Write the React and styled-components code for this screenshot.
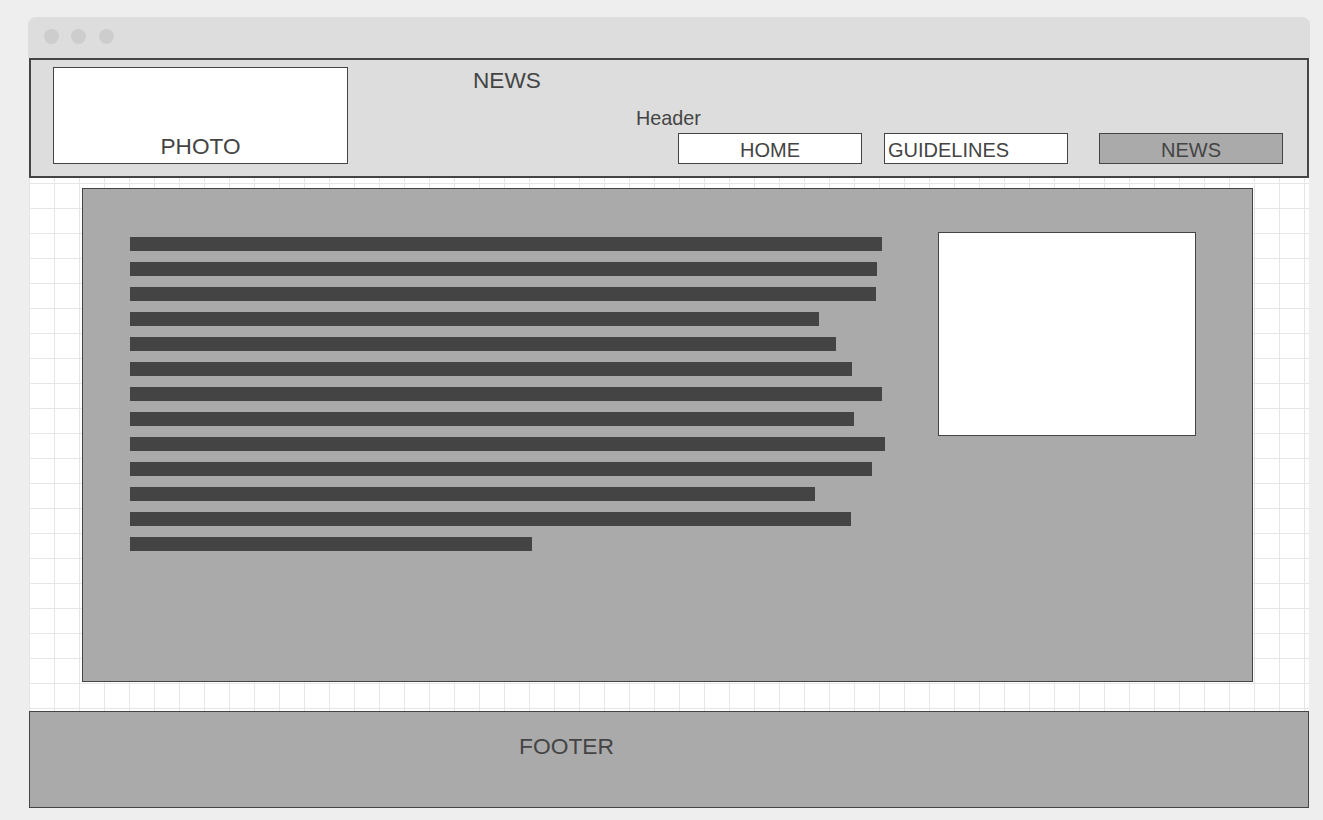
import React from 'react'
import styled, { createGlobalStyle } from 'styled-components'

const GlobalStyle = createGlobalStyle`
  * { box-sizing: border-box; }
  body {
    margin: 0;
    background: #eeeeee;
    font-family: "Liberation Sans", Arial, sans-serif;
    color: #444444;
  }
`

const Page = styled.div`
  padding: 17px 13px 12px 28px;
`

const Window = styled.div`
  width: 1282px;
  display: flex;
  flex-direction: column;
`

const TitleBar = styled.div`
  height: 41px;
  background: #dddddd;
  border-radius: 8px 8px 0 0;
  display: flex;
  align-items: center;
  gap: 12.5px;
  padding: 0 0 2px 15.5px;
`

const Dot = styled.span`
  width: 15px;
  height: 15px;
  border-radius: 50%;
  background: #cdcdcd;
`

const Header = styled.header`
  height: 120px;
  margin: 0 1px;
  background: #dddddd;
  border: 2px solid #444444;
  display: flex;
  padding: 7px 0 0 22px;
`

const Photo = styled.div`
  flex: none;
  width: 295px;
  height: 97px;
  background: #ffffff;
  border: 1px solid #444444;
  display: flex;
  align-items: flex-end;
  justify-content: center;
  font-size: 22.6px;
  padding-bottom: 3px;
`

const HeaderBody = styled.div`
  flex: 1;
  display: flex;
  flex-direction: column;
`

const SiteTitle = styled.div`
  font-size: 22.6px;
  line-height: 26px;
  padding: 0 0 0 125px;
  margin-top: 1px;
`

const Label = styled.div`
  font-size: 19.8px;
  line-height: 22px;
  padding-left: 288px;
  margin-top: 13px;
`

const Nav = styled.nav`
  display: flex;
  padding-left: 330px;
  margin-top: 4px;
`

const NavButton = styled.div`
  width: 184px;
  height: 31px;
  margin-left: ${(p) => p.$gap || 0}px;
  border: 1px solid #444444;
  background: ${(p) => (p.$active ? '#aaaaaa' : '#ffffff')};
  font-size: 20px;
  line-height: 30px;
  padding: 1px 3px 0;
  text-align: ${(p) => p.$align || 'center'};
  white-space: nowrap;
`

const Canvas = styled.main`
  height: 533px;
  margin: 0 1px;
  background-color: #ffffff;
  background-image:
    linear-gradient(to right, #e6e6e6 1px, transparent 1px),
    linear-gradient(to bottom, #e6e6e6 1px, transparent 1px);
  background-size: 25px 25px;
  background-position: 0 5px;
  padding: 10px 56px 29px 53px;
  display: flex;
`

const Article = styled.section`
  flex: 1;
  background: #aaaaaa;
  border: 1px solid #444444;
  display: flex;
  align-items: flex-start;
  padding: 48px 0 0 47px;
`

const Lines = styled.div`
  width: 790px;
  display: flex;
  flex-direction: column;
  gap: 11px;
`

const Line = styled.div`
  height: 14px;
  background: #444444;
`

const Picture = styled.div`
  width: 258px;
  height: 204px;
  margin: -5px 0 0 18px;
  background: #ffffff;
  border: 1px solid #444444;
`

const Footer = styled.footer`
  height: 97px;
  margin: 0 1px;
  background: #aaaaaa;
  border: 1px solid #444444;
  font-size: 22.8px;
  line-height: 26px;
  padding: 21px 0 0 489px;
`

const lineWidths = [752, 747, 746, 689, 706, 722, 752, 724, 755, 742, 685, 721, 402]

const App = () => {
  return (
    <>
      <GlobalStyle />
      <Page>
        <Window>
          {/* title bar */}
          <TitleBar>
            <Dot />
            <Dot />
            <Dot />
          </TitleBar>

          {/* header */}
          <Header>
            <Photo>PHOTO</Photo>
            <HeaderBody>
              <SiteTitle>NEWS</SiteTitle>
              <Label>Header</Label>
              <Nav>
                <NavButton>HOME</NavButton>
                <NavButton $gap={22} $align="left">GUIDELINES</NavButton>
                <NavButton $gap={31} $active>NEWS</NavButton>
              </Nav>
            </HeaderBody>
          </Header>

          {/* content */}
          <Canvas>
            <Article>
              <Lines>
                {lineWidths.map((w, i) => (
                  <Line key={i} style={{ width: w }} />
                ))}
              </Lines>
              <Picture />
            </Article>
          </Canvas>

          {/* footer */}
          <Footer>FOOTER</Footer>
        </Window>
      </Page>
    </>
  )
}

export default App
